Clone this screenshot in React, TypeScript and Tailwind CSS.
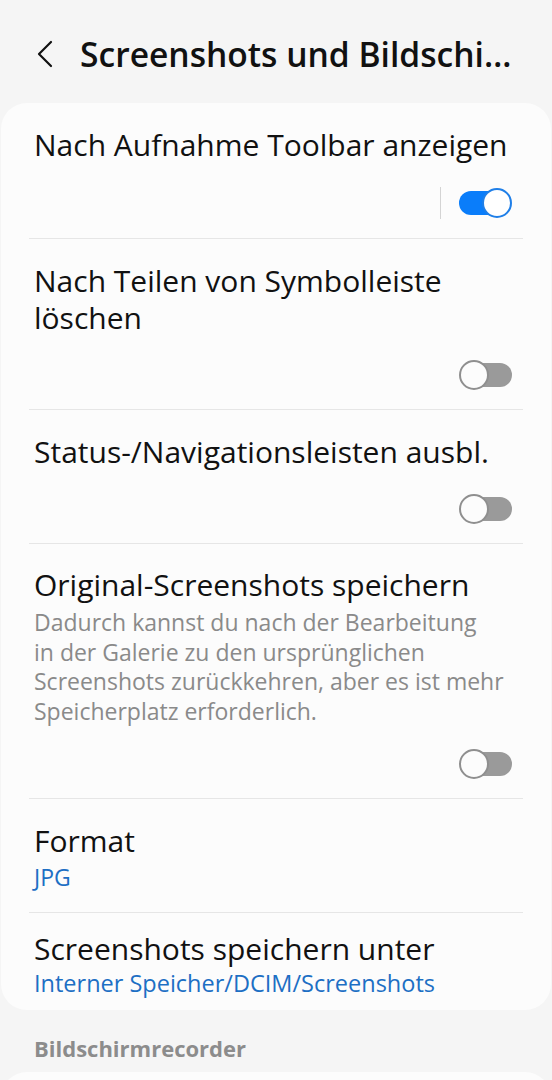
import React from 'react';

const Toggle: React.FC<{ on?: boolean }> = ({ on }) => {
  if (on) {
    return (
      <div className="relative h-[30px] w-[53px]">
        <div className="absolute left-0 top-[3px] h-[24px] w-[44px] rounded-full bg-[#0a7dfa]" />
        <div className="absolute right-0 top-0 h-[30px] w-[30px] rounded-full border-2 border-[#1f7fe8] bg-white" />
      </div>
    );
  }
  return (
    <div className="relative h-[30px] w-[53px]">
      <div className="absolute right-0 top-[3px] h-[24px] w-[44px] rounded-full bg-[#9a9a9a]" />
      <div className="absolute left-0 top-0 h-[30px] w-[30px] rounded-full border-2 border-[#8f8f8f] bg-[#fcfcfc]" />
    </div>
  );
};

const App: React.FC = () => {
  return (
    <div className="min-h-[1080px] w-[552px] overflow-hidden bg-[#f5f5f5] font-['Open_Sans',sans-serif]">
      {/* header */}
      <div className="flex h-[103px] items-center pt-[5px]">
        <svg className="ml-[36px] h-[28px] w-[18px]" viewBox="0 0 18 28" fill="none" stroke="#111" strokeWidth={2.2} strokeLinecap="round" strokeLinejoin="round">
          <path d="M15 2L3 14l12 12" />
        </svg>
        <h1 className="ml-[26px] whitespace-nowrap text-[33.6px] font-semibold leading-[44px] text-[#111]">
          Screenshots und Bildschi…
        </h1>
      </div>

      {/* main card */}
      <div className="mx-[1px] rounded-[26px] bg-[#fcfcfc]">
        <div className="mx-[28px] border-b-[1.5px] border-[#e6e6e6] pb-[19px] pl-[5px] pr-[11px] pt-[23px]">
          <div className="text-[30px] leading-[37px] text-[#111]">Nach Aufnahme Toolbar anzeigen</div>
          <div className="mt-[24px] flex items-center justify-end">
            <div className="mr-[18px] h-[32px] w-[1.5px] bg-[#d4d4d4]" />
            <Toggle on />
          </div>
        </div>

        <div className="mx-[28px] border-b-[1.5px] border-[#e6e6e6] pb-[19px] pl-[5px] pr-[11px] pt-[23px]">
          <div className="text-[30px] leading-[37px] text-[#111]">Nach Teilen von Symbolleiste löschen</div>
          <div className="mt-[24px] flex justify-end">
            <Toggle />
          </div>
        </div>

        <div className="mx-[28px] border-b-[1.5px] border-[#e6e6e6] pb-[19px] pl-[5px] pr-[11px] pt-[23px]">
          <div className="text-[30px] leading-[37px] text-[#111]">Status-/Navigationsleisten ausbl.</div>
          <div className="mt-[24px] flex justify-end">
            <Toggle />
          </div>
        </div>

        <div className="mx-[28px] border-b-[1.5px] border-[#e6e6e6] pb-[19px] pl-[5px] pr-[11px] pt-[22px]">
          <div className="text-[30px] leading-[37px] text-[#111]">Original-Screenshots speichern</div>
          <div className="mt-[5px] text-[23px] leading-[29.5px] text-[#8a8a8a]">
            Dadurch kannst du nach der Bearbeitung
            <br />
            in der Galerie zu den ursprünglichen
            <br />
            Screenshots zurückkehren, aber es ist mehr
            <br />
            Speicherplatz erforderlich.
          </div>
          <div className="mt-[23px] flex justify-end">
            <Toggle />
          </div>
        </div>

        <div className="mx-[28px] border-b-[1.5px] border-[#e6e6e6] pb-[20px] pl-[5px] pr-[11px] pt-[23px]">
          <div className="text-[30px] leading-[37px] text-[#111]">Format</div>
          <div className="mt-[3px] text-[23px] leading-[30px] text-[#1d6fc4]">JPG</div>
        </div>

        <div className="mx-[28px] pb-[12px] pl-[5px] pr-[11px] pt-[17px]">
          <div className="text-[30px] leading-[37px] text-[#111]">Screenshots speichern unter</div>
          <div className="mt-[1px] text-[23.5px] leading-[30px] text-[#1d6fc4]">Interner Speicher/DCIM/Screenshots</div>
        </div>
      </div>

      <div className="px-[34px] pt-[24px] text-[22px] font-bold leading-[28px] text-[#8c8c8c]">Bildschirmrecorder</div>
      <div className="mx-[1px] mt-[10px] h-[200px] rounded-[26px] bg-[#fcfcfc]" />
    </div>
  );
};

export default App;
